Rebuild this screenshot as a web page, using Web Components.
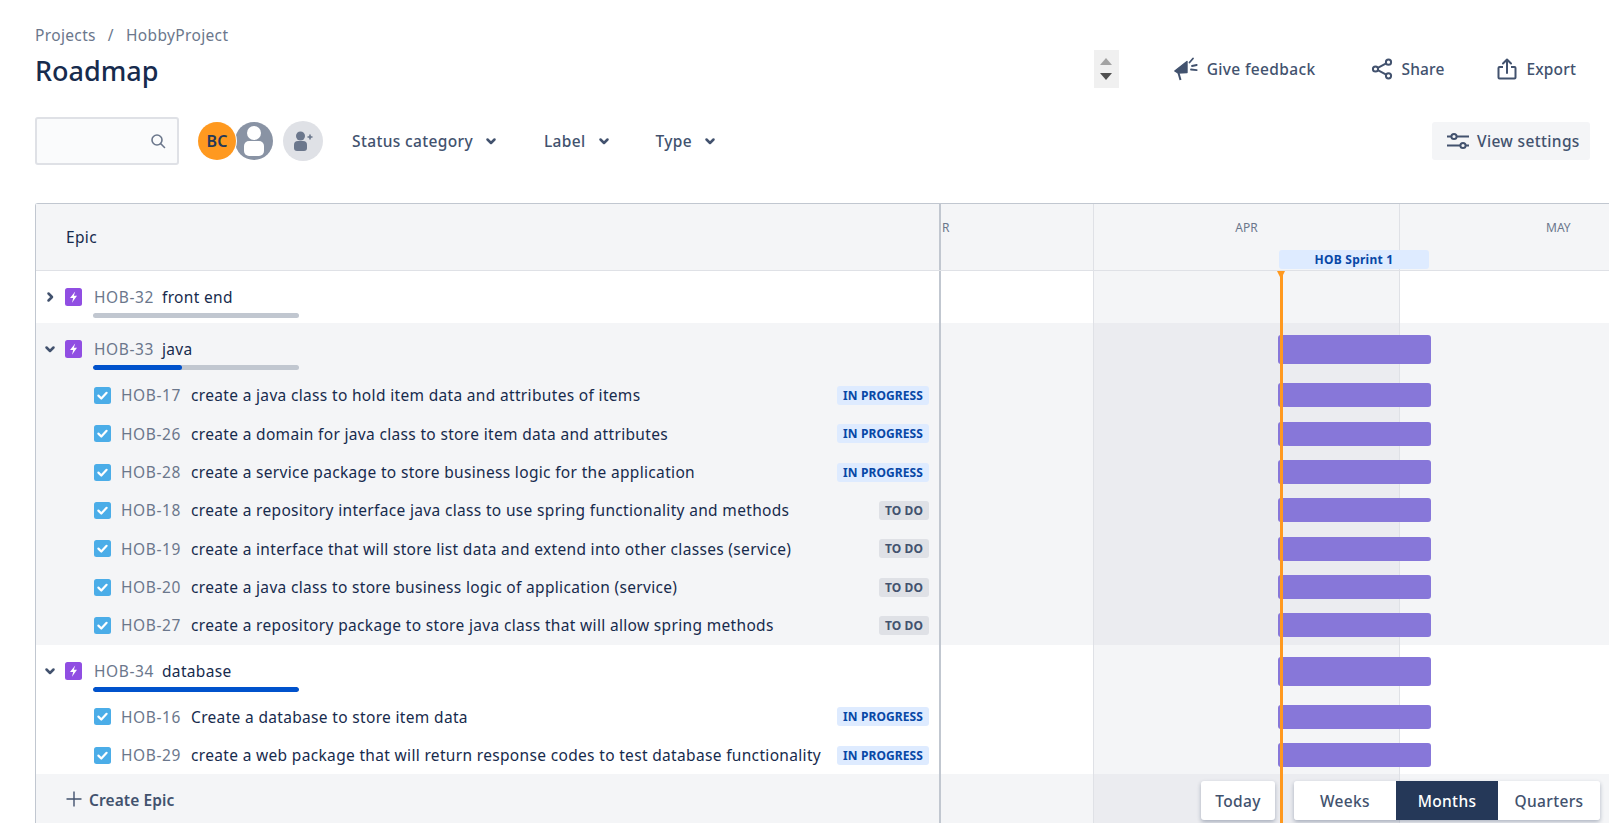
<!DOCTYPE html>
<html>
<head>
<meta charset="utf-8">
<style>
    html, body { margin: 0; height: 100%; overflow: hidden; background: #fff; }
    body { font-family: "Noto Sans", "Open Sans", sans-serif; font-size: 15.5px; letter-spacing: .35px; color: #172b4d; }
</style>
</head>
<body>
<roadmap-page></roadmap-page>
<script>
const ICONS = {
    search: '<svg width="16" height="16" viewBox="0 0 16 16" fill="none" stroke="#6b778c" stroke-width="1.6"><circle cx="7" cy="7" r="5"/><path d="M10.8 10.8l3.7 3.7" stroke-linecap="round"/></svg>',
    feedback: '<svg width="24" height="24" viewBox="0 0 24 24" fill="#42526e" stroke="#42526e"><path d="M.8 14L13 4.500V15.500L4 16z" stroke-width="1.400" stroke-linejoin="round"/><path d="M4.500 16l2 7" fill="none" stroke-width="2"/><path d="M15.500 5.500L19 1.500M18 9l4.700-1M17 12.500l5.700.6" fill="none" stroke-width="1.800" stroke-linecap="round"/></svg>',
    share: '<svg width="22" height="22" viewBox="0 0 22 22" fill="none" stroke="#42526e" stroke-width="2"><circle cx="4.500" cy="11" r="2.600"/><circle cx="17.500" cy="4.200" r="2.600"/><circle cx="17.500" cy="17.800" r="2.600"/><path d="M6.800 9.800l8.400-4.400M6.800 12.200l8.400 4.400"/></svg>',
    exportIcon: '<svg width="20" height="22" viewBox="0 0 20 22" fill="none" stroke="#42526e" stroke-width="2" stroke-linejoin="round"><path d="M6 9H2.500a1 1 0 0 0-1 1v9.500a1 1 0 0 0 1 1h15a1 1 0 0 0 1-1V10a1 1 0 0 0-1-1H14"/><path d="M10 15V2" stroke-linecap="round"/><path d="M6 5.500L10 1.500l4 4" stroke-linecap="round"/></svg>',
    sliders: '<svg width="23" height="18" viewBox="0 0 23 18" fill="none" stroke="#42526e" stroke-width="2"><path d="M0 4.500h4M10 4.500h12M0 13.500h13M19 13.500h3"/><circle cx="7" cy="4.500" r="2.600"/><circle cx="16" cy="13.500" r="2.600"/></svg>',
    chevronDown: '<svg width="12" height="12" viewBox="0 0 12 12" fill="none" stroke="#42526e" stroke-width="2.500" stroke-linecap="round" stroke-linejoin="round"><path d="M2.500 4.500L6 8l3.500-3.500"/></svg>',
    chevronRight: '<svg width="12" height="12" viewBox="0 0 12 12" fill="none" stroke="#42526e" stroke-width="2.500" stroke-linecap="round" stroke-linejoin="round"><path d="M4.500 2.500L8 6 4.500 9.500"/></svg>',
    epic: '<svg width="17" height="18" viewBox="0 0 17 18"><rect width="17" height="18" rx="2.500" fill="#904ee2"/><path d="M10.200 3.500L5 10h3.200l-1.200 4.800 5-7H8.800z" fill="#fff"/></svg>',
    story: '<svg width="17" height="17" viewBox="0 0 17 17"><rect width="17" height="17" rx="2.500" fill="#4bade8"/><path d="M4.400 8.600l2.900 2.900 5.300-5.700" fill="none" stroke="#fff" stroke-width="2.200" stroke-linecap="round" stroke-linejoin="round"/></svg>',
    addUser: '<svg width="20" height="22" viewBox="0 0 20 22" fill="#6b778c"><circle cx="7.500" cy="6" r="4.500"/><path d="M1 15a4 4 0 0 1 4-4h5a4 4 0 0 1 4 4v3a3 3 0 0 1-3 3H4a3 3 0 0 1-3-3z"/><path d="M14.500 6.200h5v1.600h-5zM16.200 4.500h1.600v5h-1.600z"/></svg>',
    plus: '<svg width="16" height="16" viewBox="0 0 16 16" stroke="#42526e" stroke-width="1.400"><path d="M8 .5v15M.5 8h15"/></svg>'
};

class RoadmapHeader extends HTMLElement {
    constructor() {
        super();
        this.attachShadow({ mode: 'open' });
        this.shadowRoot.innerHTML = `
            <style>
                :host { display: flex; height: 117px; align-items: flex-start; }
                .titles { flex: 1; padding-top: 24px; }
                .crumbs { display: flex; gap: 12px; line-height: 22px; color: #6b778c; }
                h1 { margin: 6px 0 0; font-size: 27px; line-height: 38px; font-weight: 500; letter-spacing: 0; color: #172b4d; }
                .spin { width: 25px; height: 38px; margin: 50px 55px 0 0; background: #f0f0f0; display: flex; flex-direction: column; align-items: center; justify-content: center; gap: 8px; }
                .spin i { width: 0; height: 0; border-left: 6px solid transparent; border-right: 6px solid transparent; }
                .spin .up { border-bottom: 7px solid #a3a3a3; }
                .spin .down { border-top: 7px solid #505050; }
                .actions { display: flex; height: 38px; margin-top: 50px; align-items: center; color: #42526e; font-weight: 500; }
                .actions span { display: flex; align-items: center; }
            </style>
            <div class="titles">
                <div class="crumbs"><span>Projects</span><span>/</span><span>HobbyProject</span></div>
                <h1>Roadmap</h1>
            </div>
            <div class="spin"><i class="up"></i><i class="down"></i></div>
            <div class="actions">
                <span style="gap:9px;margin-right:56px">${ICONS.feedback}Give feedback</span>
                <span style="gap:8px;margin-right:53px;letter-spacing:.15px">${ICONS.share}Share</span>
                <span style="gap:9px;margin-right:14px;letter-spacing:.15px">${ICONS.exportIcon}Export</span>
            </div>
        `;
    }
}

class RoadmapToolbar extends HTMLElement {
    constructor() {
        super();
        this.attachShadow({ mode: 'open' });
        this.shadowRoot.innerHTML = `
            <style>
                :host { display: flex; height: 48px; align-items: center; color: #42526e; font-weight: 500; }
                .search { box-sizing: border-box; width: 144px; height: 48px; background: #fafbfc; border: 2px solid #dfe1e6; border-radius: 3px; display: flex; align-items: center; justify-content: flex-end; padding-right: 11px; }
                .avatar { width: 38px; height: 38px; border-radius: 50%; display: flex; align-items: center; justify-content: center; }
                .bc { margin-left: 19px; background: #ff991f; color: #253858; font-weight: 600; font-size: 16px; letter-spacing: 0; position: relative; z-index: 1; box-shadow: 0 0 0 1px #fff; }
                .user { margin-left: -1px; background: #8993a4; overflow: hidden; position: relative; }
                .add { width: 40px; height: 40px; margin-left: 10px; background: #dfe1e6; }
                .filter { display: flex; align-items: center; gap: 12px; }
                .view { margin-left: auto; box-sizing: border-box; width: 158px; height: 38px; background: #f4f5f7; border-radius: 3px; display: flex; align-items: center; gap: 7px; padding-left: 15px; }
            </style>
            <div class="search">${ICONS.search}</div>
            <div class="avatar bc">BC</div>
            <div class="avatar user"><svg width="38" height="38" viewBox="0 0 38 38" fill="#fff"><circle cx="19" cy="11" r="7"/><rect x="9" y="19" width="20" height="15" rx="5"/></svg></div>
            <div class="avatar add">${ICONS.addUser}</div>
            <div class="filter" style="margin-left:29px">Status category ${ICONS.chevronDown}</div>
            <div class="filter" style="margin-left:47px">Label ${ICONS.chevronDown}</div>
            <div class="filter" style="margin-left:46px">Type ${ICONS.chevronDown}</div>
            <div class="view">${ICONS.sliders}View settings</div>
        `;
    }
}

class StatusLozenge extends HTMLElement {
    constructor() {
        super();
        this.attachShadow({ mode: 'open' });
        this.shadowRoot.innerHTML = `
            <style>
                :host { display: inline-block; padding: 0 6px; height: 19px; line-height: 19px; border-radius: 3px; font-size: 12px; font-weight: 700; letter-spacing: .1px; white-space: nowrap; background: #dfe1e6; color: #42526e; }
                :host([tone="progress"]) { background: #deebff; color: #0747a6; }
            </style>
            <slot></slot>
        `;
    }
}

// one row of the roadmap: issue on the left, its bar on the timeline to the right
class RoadmapRow extends HTMLElement {
    constructor() {
        super();
        this.attachShadow({ mode: 'open' });
    }

    connectedCallback() {
        const kind = this.getAttribute('kind') || 'story';
        const status = this.getAttribute('status');
        const progress = this.getAttribute('progress');
        const isEpic = kind === 'epic';
        const chevron = this.hasAttribute('collapsed') ? ICONS.chevronRight : ICONS.chevronDown;
        const hasBar = !this.hasAttribute('nobar');

        this.shadowRoot.innerHTML = `
            <style>
                :host { display: grid; grid-template-columns: 903px 2px 152px 1px 305px 1px 1fr; background: var(--row-bg, #fff); height: 38.33px; }
                :host([kind="epic"]) { height: 53px; }
                :host([tall]) { height: 53.33px; }
                :host([collapsed]) { height: 52px; }
                .issue { position: relative; display: flex; align-items: center; min-width: 0; padding: 0 10px 0 58px; height: 100%; box-sizing: border-box; white-space: nowrap; }
                :host([kind="epic"]) .issue { align-items: flex-start; padding: 17px 10px 0 8px; }
                .chev { width: 21px; height: 18px; display: flex; align-items: center; }
                .icon { display: flex; margin-right: 10px; }
                :host([kind="epic"]) .icon { margin-right: 12px; }
                .key { color: #6b778c; margin-right: 10px; line-height: 18px; letter-spacing: .6px; }
                :host([kind="epic"]) .key { margin-right: 8px; }
                .name { flex: 1; line-height: 18px; letter-spacing: .33px; }
                .progress { position: absolute; left: 57px; top: 42px; width: 206px; height: 5px; border-radius: 3px; background: #c1c7d0; overflow: hidden; }
                .progress i { display: block; height: 100%; background: #0052cc; border-radius: 3px; }
                .divider { background: #c1c7d0; }
                .line { background: #dfe1e6; }
                .active { background: var(--active-bg, #f4f5f7); position: relative; }
                .bar { position: absolute; left: 184px; width: 153px; top: 7px; height: 24px; background: #8777d9; border-radius: 3px; z-index: 1; }
                :host([kind="epic"]) .bar { top: 12px; height: 29px; }
            </style>
            <div class="issue">
                ${isEpic ? `<span class="chev">${chevron}</span>` : ''}
                <span class="icon">${isEpic ? ICONS.epic : ICONS.story}</span>
                <span class="key">${this.getAttribute('key')}</span>
                <span class="name">${this.getAttribute('name')}</span>
                ${status ? `<status-lozenge tone="${status === 'IN PROGRESS' ? 'progress' : 'todo'}">${status}</status-lozenge>` : ''}
                ${progress !== null ? `<div class="progress"><i style="width:${progress}%"></i></div>` : ''}
            </div>
            <div class="divider"></div>
            <div></div>
            <div class="line"></div>
            <div class="active">${hasBar ? '<div class="bar"></div>' : ''}</div>
            <div class="line"></div>
            <div></div>
        `;
    }
}

class RoadmapTable extends HTMLElement {
    constructor() {
        super();
        this.attachShadow({ mode: 'open' });
        this.shadowRoot.innerHTML = `
            <style>
                :host { display: block; position: relative; border-top: 1px solid #c1c7d0; border-left: 1px solid #c1c7d0; border-top-left-radius: 3px; margin-top: 38px; }
                .head { display: grid; grid-template-columns: 903px 2px 152px 1px 305px 1px 1fr; height: 66px; background: #f4f5f7; border-bottom: 1px solid #dfe1e6; }
                .epic { padding: 22px 0 0 30px; line-height: 22px; }
                .divider { background: #c1c7d0; }
                .line { background: #dfe1e6; }
                .month { position: relative; font-size: 12px; color: #6b778c; padding-top: 15px; line-height: 18px; letter-spacing: 0; }
                .sprint { position: absolute; left: 185px; top: 46px; width: 150px; height: 19px; line-height: 19px; border-radius: 3px; background: #deebff; color: #0747a6; font-size: 12px; font-weight: 700; letter-spacing: .25px; text-align: center; }
                .foot { display: grid; grid-template-columns: 903px 2px 152px 1px 305px 1px 1fr; height: 60px; background: #f4f5f7; }
                .create { display: flex; align-items: flex-start; gap: 7px; padding: 17px 0 0 30px; color: #42526e; font-weight: 600; line-height: 18px; letter-spacing: .1px; }
                .active { background: #ebecf0; }
                .today { position: absolute; z-index: 2; left: 1244px; top: 67px; bottom: 0; width: 3px; background: #ff991f; }
                .today::before { content: ""; position: absolute; left: -3px; top: 0; border-left: 4.5px solid transparent; border-right: 4.5px solid transparent; border-top: 8px solid #ff991f; }
            </style>
            <div class="head">
                <div class="epic">Epic</div>
                <div class="divider"></div>
                <div class="month" style="padding-left:1px">R</div>
                <div class="line"></div>
                <div class="month" style="text-align:center">APR<div class="sprint">HOB Sprint 1</div></div>
                <div class="line"></div>
                <div class="month" style="padding-left:146px">MAY</div>
            </div>
            <slot></slot>
            <div class="foot">
                <div class="create">${ICONS.plus}<span>Create Epic</span></div>
                <div class="divider"></div>
                <div></div>
                <div class="line"></div>
                <div class="active"></div>
                <div class="line"></div>
                <div></div>
            </div>
            <div class="today"></div>
            <slot name="controls"></slot>
        `;
    }
}

class ViewControls extends HTMLElement {
    constructor() {
        super();
        this.attachShadow({ mode: 'open' });
        this.shadowRoot.innerHTML = `
            <style>
                :host { position: absolute; z-index: 3; top: 577px; left: 1165px; display: flex; gap: 19px; color: #42526e; font-weight: 500; }
                .btn { height: 39px; display: flex; align-items: center; justify-content: center; background: #fff; }
                .today { width: 74px; border-radius: 3px; box-shadow: 0 2px 4px rgba(9,30,66,.3); }
                .group { display: flex; border-radius: 3px; box-shadow: 0 2px 4px rgba(9,30,66,.3); overflow: hidden; }
                .group .btn { width: 102px; }
                .group .on { background: #253858; color: #fff; }
            </style>
            <div class="btn today">Today</div>
            <div class="group">
                <div class="btn">Weeks</div>
                <div class="btn on">Months</div>
                <div class="btn">Quarters</div>
            </div>
        `;
    }
}

class RoadmapPage extends HTMLElement {
    constructor() {
        super();
        this.attachShadow({ mode: 'open' });
        const story = (key, name, status) => `<roadmap-row key="${key}" name="${name}" status="${status}"></roadmap-row>`;
        this.shadowRoot.innerHTML = `
            <style>
                :host { display: block; box-sizing: border-box; width: 1609px; padding-left: 35px; }
                .inner { padding-right: 19px; }
                .grey { --row-bg: #f4f5f7; --active-bg: #ebecf0; }
            </style>
            <div class="inner">
                <roadmap-header></roadmap-header>
                <roadmap-toolbar></roadmap-toolbar>
            </div>
            <roadmap-table>
                <roadmap-row kind="epic" key="HOB-32" name="front end" progress="0" collapsed nobar></roadmap-row>
                <div class="grey">
                    <roadmap-row kind="epic" key="HOB-33" name="java" progress="43" tall></roadmap-row>
                    ${story('HOB-17', 'create a java class to hold item data and attributes of items', 'IN PROGRESS')}
                    ${story('HOB-26', 'create a domain for java class to store item data and attributes', 'IN PROGRESS')}
                    ${story('HOB-28', 'create a service package to store business logic for the application', 'IN PROGRESS')}
                    ${story('HOB-18', 'create a repository interface java class to use spring functionality and methods', 'TO DO')}
                    ${story('HOB-19', 'create a interface that will store list data and extend into other classes (service)', 'TO DO')}
                    ${story('HOB-20', 'create a java class to store business logic of application (service)', 'TO DO')}
                    ${story('HOB-27', 'create a repository package to store java class that will allow spring methods', 'TO DO')}
                </div>
                <roadmap-row kind="epic" key="HOB-34" name="database" progress="100"></roadmap-row>
                ${story('HOB-16', 'Create a database to store item data', 'IN PROGRESS')}
                ${story('HOB-29', 'create a web package that will return response codes to test database functionality', 'IN PROGRESS')}
                <view-controls slot="controls"></view-controls>
            </roadmap-table>
        `;
    }
}

customElements.define('roadmap-header', RoadmapHeader);
customElements.define('roadmap-toolbar', RoadmapToolbar);
customElements.define('status-lozenge', StatusLozenge);
customElements.define('roadmap-row', RoadmapRow);
customElements.define('roadmap-table', RoadmapTable);
customElements.define('view-controls', ViewControls);
customElements.define('roadmap-page', RoadmapPage);
</script>
</body>
</html>
